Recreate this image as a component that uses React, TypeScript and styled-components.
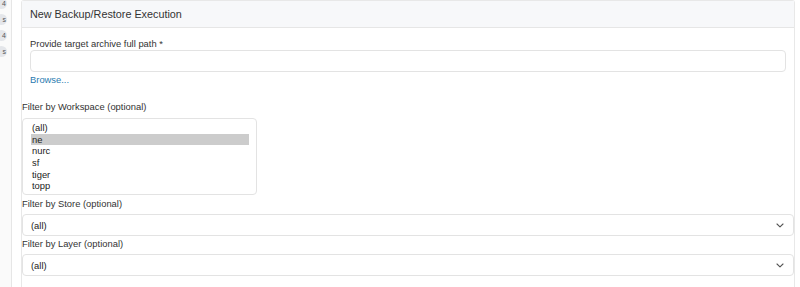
import React from "react"
import styled, { createGlobalStyle } from "styled-components"

const GlobalStyle = createGlobalStyle`
    html, body {
        margin: 0;
        padding: 0;
        background: #ffffff;
    }
    body {
        font-family: "Liberation Sans", Arial, sans-serif;
        color: #333333;
    }
`

const Page = styled.div`
    display: flex;
    width: 800px;
    height: 287px;
    overflow: hidden;
`

const Sidebar = styled.div`
    display: flex;
    flex-direction: column;
    gap: 5px;
    width: 12px;
    flex-shrink: 0;
    background: #fafafa;
    border-right: 1px solid #e6e6e6;
    box-sizing: border-box;
    overflow: hidden;
`

const SideBadge = styled.div<{ $offset: number }>`
    width: 11px;
    height: 11px;
    margin-left: -4px;
    margin-top: ${p => p.$offset}px;
    border-radius: 50%;
    background: #e4e6ea;
    color: #555555;
    font-size: 7px;
    line-height: 11px;
    text-align: right;
    padding-right: 1px;
    box-sizing: border-box;
`

const Main = styled.div`
    flex: 1;
    padding-left: 9px;
    padding-right: 5px;
    min-width: 0;
`

const Card = styled.div`
    border: 1px solid #e8e8e8;
    border-bottom: none;
    border-radius: 3px 3px 0 0;
    height: 100%;
    box-sizing: border-box;
`

const CardHeader = styled.div`
    display: flex;
    align-items: center;
    height: 26px;
    padding: 0 8px;
    background: #f7f8fa;
    border-bottom: 1px solid #e6e6e6;
    font-size: 10.8px;
    color: #333333;
`

const CardBody = styled.div`
    padding: 10px 8px 0;
`

const FieldLabel = styled.div<{ $top?: number }>`
    font-size: 9.4px;
    line-height: 11px;
    margin-top: ${p => p.$top ?? 0}px;
    color: #333333;
`

const TextInput = styled.input`
    display: block;
    width: 100%;
    height: 22px;
    margin-top: 1px;
    box-sizing: border-box;
    border: 1px solid #e3e3e3;
    border-radius: 4px;
    outline: none;
    background: #ffffff;
`

const BrowseLink = styled.a`
    display: block;
    margin-top: 2px;
    font-size: 9.4px;
    line-height: 11px;
    color: #2a7bb0;
    text-decoration: none;
`

const FilterArea = styled.div`
    padding-top: 16px;
`

const ListBox = styled.div`
    width: 235px;
    height: 77px;
    margin-top: 6px;
    padding: 3px 7px 0 8px;
    box-sizing: border-box;
    border: 1px solid #e3e3e3;
    border-radius: 4px;
`

const ListOption = styled.div<{ $selected?: boolean }>`
    height: 11.7px;
    line-height: 11.7px;
    font-size: 9.4px;
    padding-left: 1px;
    color: #222222;
    background: ${p => (p.$selected ? "#cccccc" : "transparent")};
`

const SelectBox = styled.div`
    display: flex;
    align-items: center;
    justify-content: space-between;
    height: 22px;
    margin-top: 5px;
    padding: 0 9px 0 8px;
    box-sizing: border-box;
    border: 1px solid #e3e3e3;
    border-radius: 4px;
    font-size: 9.4px;
    color: #222222;
`

const Chevron = () => (
    <svg width="8" height="5" viewBox="0 0 8 5" fill="none">
        <path d="M1 1l3 2.8L7 1" stroke="#555" strokeWidth="1.1" strokeLinecap="round" strokeLinejoin="round" />
    </svg>
)

const workspaces = ["(all)", "ne", "nurc", "sf", "tiger", "topp"]

const App = () => {
    return (
        <>
            <GlobalStyle />
            <Page>
                <Sidebar>
                    <SideBadge $offset={-2}>4</SideBadge>
                    <SideBadge $offset={0}>s</SideBadge>
                    <SideBadge $offset={0}>4</SideBadge>
                    <SideBadge $offset={0}>s</SideBadge>
                </Sidebar>
                <Main>
                    <Card>
                        <CardHeader>New Backup/Restore Execution</CardHeader>
                        <CardBody>
                            <FieldLabel>Provide target archive full path *</FieldLabel>
                            <TextInput type="text" />
                            <BrowseLink href="#">Browse...</BrowseLink>
                        </CardBody>
                        <FilterArea>
                            <FieldLabel>Filter by Workspace (optional)</FieldLabel>
                            <ListBox>
                                {workspaces.map(w => (
                                    <ListOption key={w} $selected={w === "ne"}>{w}</ListOption>
                                ))}
                            </ListBox>
                            <FieldLabel $top={3}>Filter by Store (optional)</FieldLabel>
                            <SelectBox>
                                <span>(all)</span>
                                <Chevron />
                            </SelectBox>
                            <FieldLabel $top={2}>Filter by Layer (optional)</FieldLabel>
                            <SelectBox>
                                <span>(all)</span>
                                <Chevron />
                            </SelectBox>
                        </FilterArea>
                    </Card>
                </Main>
            </Page>
        </>
    )
}

export default App
